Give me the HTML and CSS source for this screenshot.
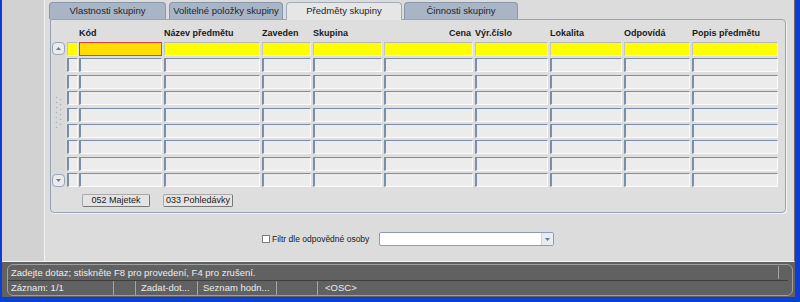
FILE: index.html
```html
<!DOCTYPE html>
<html lang="cs">
<head>
    <meta charset="UTF-8">
    <title>Předměty skupiny</title>
    <link rel="stylesheet" href="styles.css">
</head>
<body>
    <div class="window">
        <div class="client">
            <div class="sidebar"></div>
            <div class="main">
                <div class="tabs">
                    <div class="tab tab-1">Vlastnosti skupiny</div>
                    <div class="tab tab-2">Volitelné položky skupiny</div>
                    <div class="tab tab-3 active">Předměty skupiny</div>
                    <div class="tab tab-4">Činnosti skupiny</div>
                </div>
                <div class="panel">
                    <div class="block">
                        <div class="scrollbar">
                            <div class="sb-btn">
                                <svg width="5" height="3" viewBox="0 0 5 3"><path d="M0 3 L2.5 0 L5 3 Z" fill="#6a7a98"/></svg>
                            </div>
                            <svg class="grip" width="7" height="34" viewBox="0 0 7 34">
                                <g fill="#a4afbf">
                                    <circle cx="1.5" cy="1.5" r="0.8"/><circle cx="5.5" cy="3.5" r="0.8"/>
                                    <circle cx="1.5" cy="6.5" r="0.8"/><circle cx="5.5" cy="8.5" r="0.8"/>
                                    <circle cx="1.5" cy="11.5" r="0.8"/><circle cx="5.5" cy="13.5" r="0.8"/>
                                    <circle cx="1.5" cy="16.5" r="0.8"/><circle cx="5.5" cy="18.5" r="0.8"/>
                                    <circle cx="1.5" cy="21.5" r="0.8"/><circle cx="5.5" cy="23.5" r="0.8"/>
                                    <circle cx="1.5" cy="26.5" r="0.8"/><circle cx="5.5" cy="28.5" r="0.8"/>
                                    <circle cx="1.5" cy="31.5" r="0.8"/>
                                </g>
                            </svg>
                            <div class="sb-btn">
                                <svg width="5" height="3" viewBox="0 0 5 3"><path d="M0 0 L2.5 3 L5 0 Z" fill="#6a7a98"/></svg>
                            </div>
                        </div>
                        <div class="grid">
                            <div class="hd"></div>
                            <div class="hd">Kód</div>
                            <div class="hd">Název předmětu</div>
                            <div class="hd">Zaveden</div>
                            <div class="hd">Skupina</div>
                            <div class="hd hd-right">Cena</div>
                            <div class="hd">Výr.číslo</div>
                            <div class="hd">Lokalita</div>
                            <div class="hd">Odpovídá</div>
                            <div class="hd">Popis předmětu</div>

                            <div class="cell ind current-row"></div><div class="cell current-row current"></div><div class="cell current-row"></div><div class="cell current-row"></div><div class="cell current-row"></div><div class="cell current-row"></div><div class="cell current-row"></div><div class="cell current-row"></div><div class="cell current-row"></div><div class="cell current-row"></div>
                            <div class="cell ind"></div><div class="cell"></div><div class="cell"></div><div class="cell"></div><div class="cell"></div><div class="cell"></div><div class="cell"></div><div class="cell"></div><div class="cell"></div><div class="cell"></div>
                            <div class="cell ind"></div><div class="cell"></div><div class="cell"></div><div class="cell"></div><div class="cell"></div><div class="cell"></div><div class="cell"></div><div class="cell"></div><div class="cell"></div><div class="cell"></div>
                            <div class="cell ind"></div><div class="cell"></div><div class="cell"></div><div class="cell"></div><div class="cell"></div><div class="cell"></div><div class="cell"></div><div class="cell"></div><div class="cell"></div><div class="cell"></div>
                            <div class="cell ind"></div><div class="cell"></div><div class="cell"></div><div class="cell"></div><div class="cell"></div><div class="cell"></div><div class="cell"></div><div class="cell"></div><div class="cell"></div><div class="cell"></div>
                            <div class="cell ind"></div><div class="cell"></div><div class="cell"></div><div class="cell"></div><div class="cell"></div><div class="cell"></div><div class="cell"></div><div class="cell"></div><div class="cell"></div><div class="cell"></div>
                            <div class="cell ind"></div><div class="cell"></div><div class="cell"></div><div class="cell"></div><div class="cell"></div><div class="cell"></div><div class="cell"></div><div class="cell"></div><div class="cell"></div><div class="cell"></div>
                            <div class="cell ind"></div><div class="cell"></div><div class="cell"></div><div class="cell"></div><div class="cell"></div><div class="cell"></div><div class="cell"></div><div class="cell"></div><div class="cell"></div><div class="cell"></div>
                            <div class="cell ind"></div><div class="cell"></div><div class="cell"></div><div class="cell"></div><div class="cell"></div><div class="cell"></div><div class="cell"></div><div class="cell"></div><div class="cell"></div><div class="cell"></div>
                        </div>
                    </div>
                    <div class="buttons">
                        <div class="btn btn-majetek">052 Majetek</div>
                        <div class="btn btn-pohledavky">033 Pohledávky</div>
                    </div>
                </div>
                <div class="filter">
                    <span class="checkbox"></span>
                    <span class="filter-label">Filtr dle odpovědné osoby</span>
                    <div class="select">
                        <span class="select-arrow">
                            <svg width="5" height="3" viewBox="0 0 5 3"><path d="M0 0 L2.5 3 L5 0 Z" fill="#6a7a98"/></svg>
                        </span>
                    </div>
                </div>
            </div>
        </div>
        <div class="status">
            <div class="status-frame">
                <div class="status-msg">
                    <span class="msg-text">Zadejte dotaz; stiskněte F8 pro provedení, F4 pro zrušení.</span>
                    <span class="msg-end"></span>
                </div>
                <div class="status-info">
                    <span class="seg seg-1">Záznam: 1/1</span>
                    <span class="seg seg-2"></span>
                    <span class="seg seg-3">Zadat-dot...</span>
                    <span class="seg seg-4">Seznam hodn...</span>
                    <span class="seg seg-5"></span>
                    <span class="seg seg-6">&lt;OSC&gt;</span>
                </div>
            </div>
        </div>
    </div>
</body>
</html>
```

FILE: styles.css
```css
body {
    margin: 0;
    padding: 0;
    height: 302px;
    overflow: hidden;
    background-color: #0c3ed6;
    font-family: 'Liberation Sans', Arial, sans-serif;
    color: #1a1a1a;
}

.window {
    margin: 0 5px 0 2px;
    height: 297px;
    display: flex;
    flex-direction: column;
}

.client {
    height: 262px;
    display: flex;
    background-color: #dcdcdc;
}

.sidebar {
    width: 42px;
    height: 261px;
    background-color: #d2d2d2;
    border-right: 1px solid #f2f2f2;
    border-bottom: 1px solid #f2f2f2;
}

.main {
    flex: 1;
    padding-top: 2px;
    border-right: 1px solid #6a6a6a;
    border-bottom: 1px solid #f2f2f2;
}

/* Tabs */
.tabs {
    display: flex;
    align-items: flex-end;
    margin-left: 4px;
    height: 17px;
}

.tab {
    box-sizing: border-box;
    height: 17px;
    background-color: #a9b5c4;
    border: 1px solid #8797ab;
    border-bottom: none;
    border-radius: 4px 4px 0 0;
    font-size: 9.5px;
    line-height: 16px;
    text-align: center;
    white-space: nowrap;
    color: #1e2430;
}

.tab-1 { width: 117px; margin-right: 3px; }
.tab-2 { width: 114px; margin-right: 3px; }
.tab-3 { width: 116px; margin-right: 2px; }
.tab-4 { width: 114px; }

.tab.active {
    background-color: #e6e6e6;
    border-color: #a2abb8;
    height: 18px;
    margin-bottom: -1px;
    position: relative;
    z-index: 1;
}

/* Block panel */
.panel {
    box-sizing: border-box;
    margin-left: 5px;
    width: 736px;
    height: 194px;
    padding: 8px 0 0 1px;
    background-color: #dedede;
    border: 1px solid #97a3b5;
    border-radius: 0 4px 4px 4px;
    box-shadow: 1px 1px 0 #f4f4f4;
}

.block {
    display: flex;
    gap: 2px;
}

.scrollbar {
    box-sizing: border-box;
    width: 13px;
    height: 145px;
    margin-top: 14px;
    display: flex;
    flex-direction: column;
    justify-content: space-between;
    align-items: center;
    background-color: #d9d9d9;
    border-radius: 4px;
}

.sb-btn {
    box-sizing: border-box;
    width: 13px;
    height: 13px;
    display: flex;
    align-items: center;
    justify-content: center;
    background-color: #ebebeb;
    border: 1px solid #9aa6b8;
    border-radius: 4px;
}

.grip {
    margin-top: -4px;
}

.grid {
    display: grid;
    grid-template-columns: 12px 85px 98px 51px 71px 91px 75px 74px 68px 88px;
    grid-template-rows: 14px;
    grid-auto-rows: 16.4px;
}

.hd {
    font-size: 9px;
    font-weight: bold;
    line-height: 11px;
    white-space: nowrap;
}

.hd-right {
    text-align: right;
    padding-right: 4px;
}

.cell {
    box-sizing: border-box;
    height: 14px;
    margin-right: 2px;
    background-color: #ececec;
    border-top: 1px solid #7b8ea9;
    border-left: 2px solid #7b8ea9;
    border-right: 1px solid #fbfbfb;
    border-bottom: 1px solid #fbfbfb;
}

.cell.ind {
    margin-right: 1px;
}

.cell.current-row {
    background-color: #ffff00;
    border-top-color: #b9b9b9;
    border-left: 1px solid #c4c4c4;
    border-right-color: #f0f0f0;
    border-bottom-color: #f0f0f0;
}

.cell.current {
    background-color: #ffde00;
    border: 1px solid #e03c3c;
}

.buttons {
    display: flex;
    gap: 13px;
    margin: 4px 0 0 30px;
}

.btn {
    box-sizing: border-box;
    height: 13px;
    background-color: #e4e4e4;
    border: 1px solid #a8a8a8;
    border-right-color: #777;
    border-bottom-color: #777;
    border-radius: 2px;
    font-size: 9px;
    line-height: 11px;
    text-align: center;
}

.btn-majetek { width: 68px; }
.btn-pohledavky { width: 70px; }

/* Filter row */
.filter {
    display: flex;
    align-items: center;
    margin-top: 19px;
    padding-left: 217px;
    height: 14px;
}

.checkbox {
    box-sizing: border-box;
    width: 8px;
    height: 8px;
    background-color: #fff;
    border: 1px solid #7c7c7c;
    margin-right: 2px;
}

.filter-label {
    font-size: 8.5px;
    width: 107px;
}

.select {
    box-sizing: border-box;
    width: 175px;
    height: 14px;
    display: flex;
    justify-content: flex-end;
    background-color: #fff;
    border: 1px solid #8a9cb8;
    border-radius: 2px;
}

.select-arrow {
    width: 11px;
    display: flex;
    align-items: center;
    justify-content: center;
    background-color: #e8ebf0;
    border-left: 1px solid #d0d6e0;
}

/* Status bar */
.status {
    box-sizing: border-box;
    height: 35px;
    padding: 2px 2px 1px 5px;
    background-color: #616161;
}

.status-frame {
    box-sizing: border-box;
    height: 32px;
    border: 1px solid #a0a0a0;
    border-radius: 6px;
    color: #ececec;
    font-size: 9.5px;
}

.status-msg {
    display: flex;
    justify-content: space-between;
    height: 15px;
    line-height: 15px;
    padding-left: 3px;
    margin-right: 4px;
    border-bottom: 1px solid #3e3e3e;
}

.msg-end {
    width: 1px;
    margin: 1px 9px 1px 0;
    background-color: #a4a4a4;
}

.status-info {
    display: flex;
    height: 14px;
    line-height: 14px;
}

.seg {
    box-sizing: border-box;
    height: 14px;
    border-right: 1px solid #a4a4a4;
    white-space: nowrap;
}

.seg-1 { width: 106px; padding-left: 3px; }
.seg-2 { width: 22px; }
.seg-3 { width: 62px; padding-left: 5px; }
.seg-4 { width: 79px; padding-left: 5px; }
.seg-5 { width: 41px; }
.seg-6 { border-right: none; padding-left: 7px; }
```
